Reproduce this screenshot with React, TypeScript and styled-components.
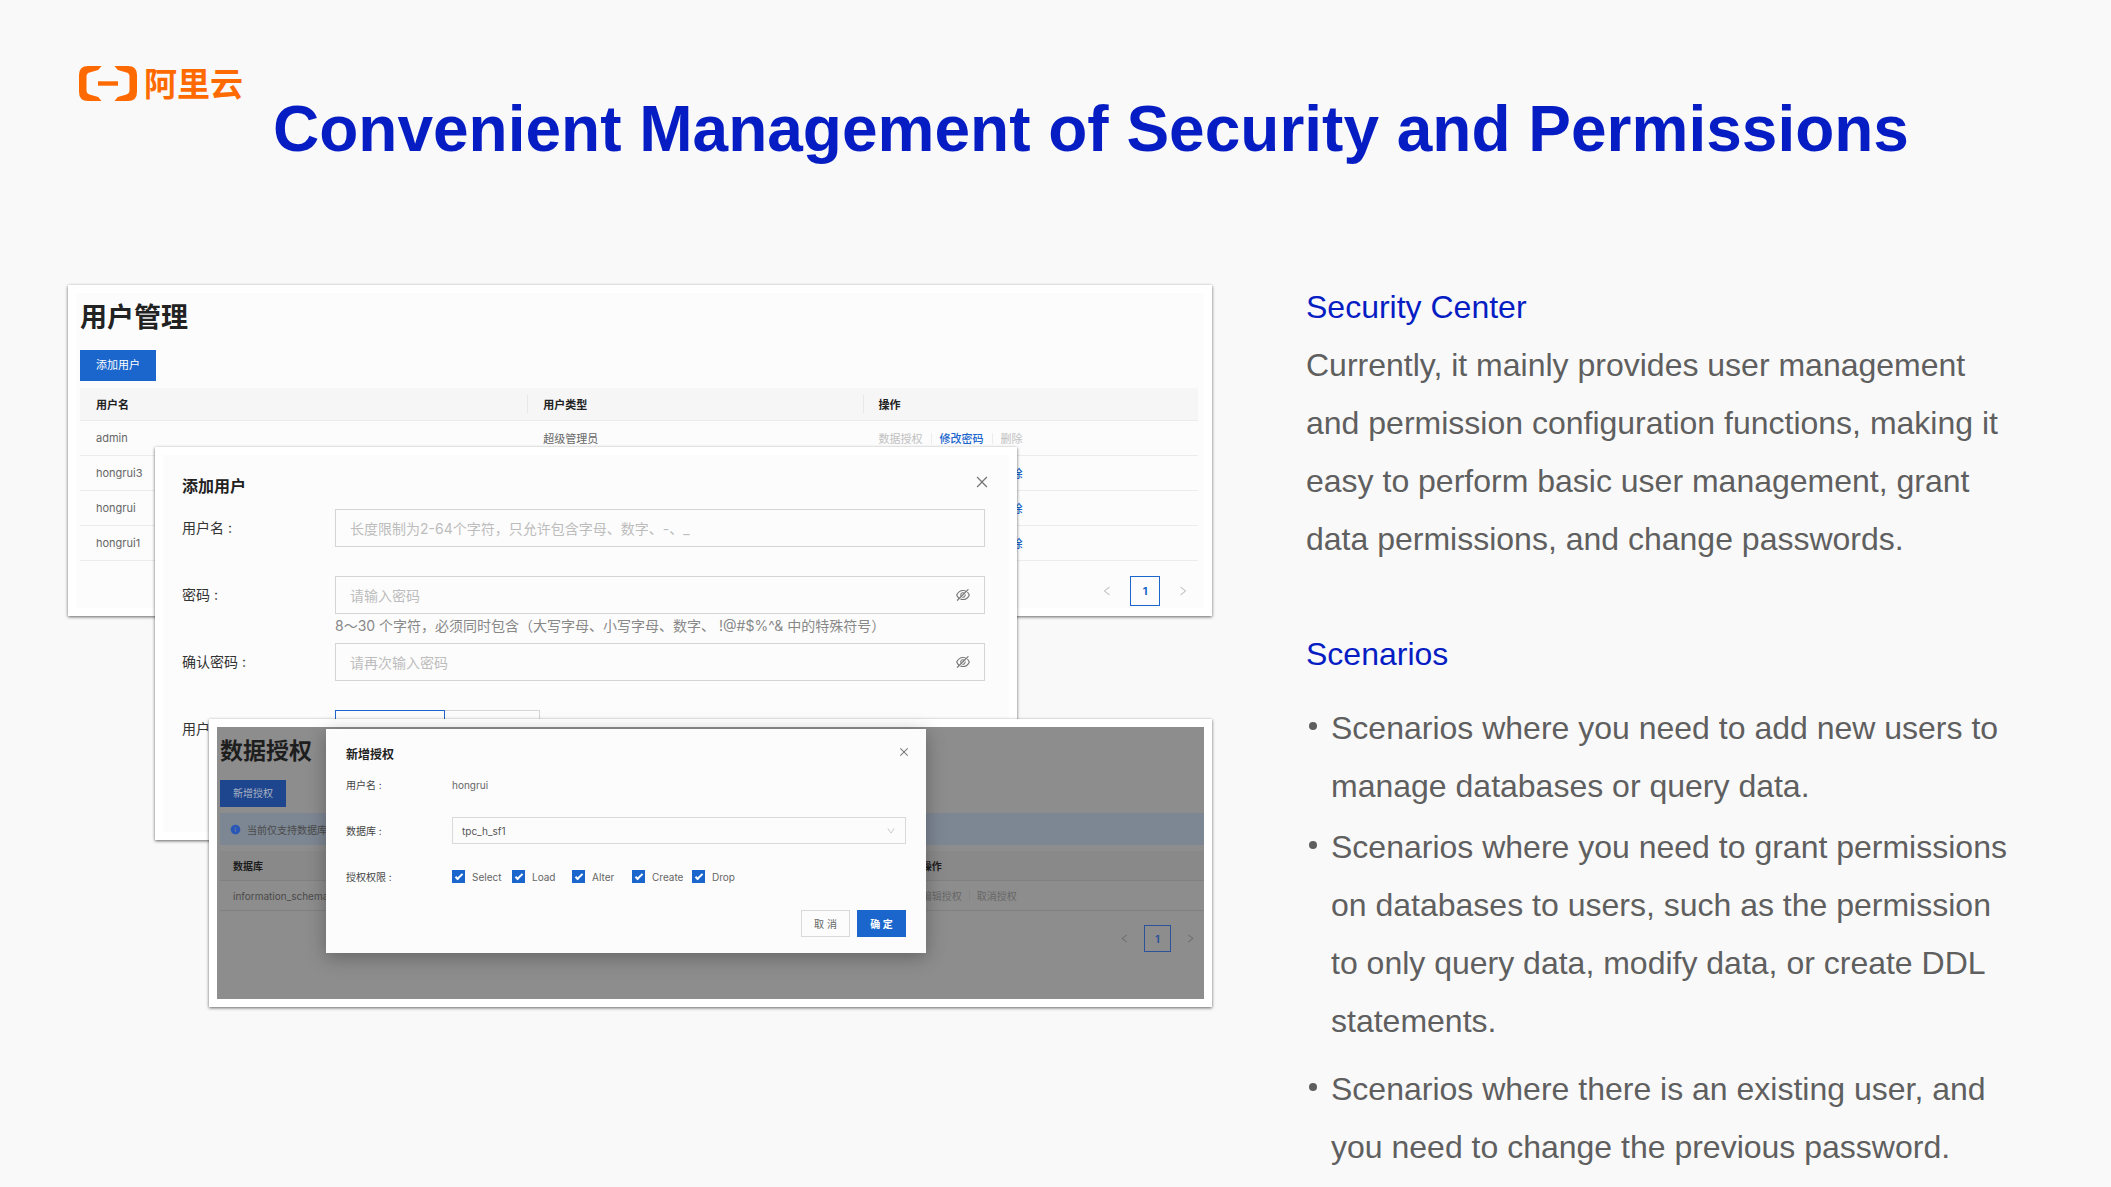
import React from 'react';
import styled, { createGlobalStyle, css } from 'styled-components';
import {
  AiFillInfoCircle,
  AiOutlineClose,
  AiOutlineDown,
  AiOutlineEyeInvisible,
  AiOutlineLeft,
  AiOutlineRight,
} from 'react-icons/ai';

const sans = '"Liberation Sans", Arial, sans-serif';
const ui = 'Inter, "Noto Sans CJK SC", sans-serif';
const blue = '#1a66cc';
const titleBlue = '#071dc4';

const GlobalStyle = createGlobalStyle`
  *, *::before, *::after { box-sizing: border-box; }
  body { margin: 0; background: #f9f9f9; }
  h1, h2, h3, p, ul { margin: 0; padding: 0; font-weight: inherit; }
  button, input, select { font: inherit; color: inherit; margin: 0; }
  button { padding: 0; border: 0; background: none; cursor: pointer; }
  a { text-decoration: none; }
`;

const Page = styled.div`
  min-height: 100vh;
  background: #f9f9f9;
`;

/* ---------- slide header ---------- */

const Header = styled.header`
  display: flex;
  align-items: flex-start;
  gap: 30px;
  padding: 66px 96px 0 79px;
`;

const Brand = styled.div`
  display: flex;
  align-items: flex-start;
  gap: 7px;
  flex: none;
  height: 35px;
  color: #ff6a00;
  font: 700 33px/32px "Noto Sans CJK SC", sans-serif;
`;

const PageTitle = styled.h1`
  margin-top: 27px;
  color: ${titleBlue};
  font: 700 64px/72px ${sans};
`;

const Main = styled.main`
  display: grid;
  grid-template-columns: minmax(0, 1144fr) minmax(0, 708fr);
  gap: 94px;
  align-items: start;
  margin-top: 113px;
  padding: 0 97px 0 68px;
`;

/* ---------- right-hand copy ---------- */

const Copy = styled.section`
  color: #5f5f5f;
  font: 32px/58px ${sans};
`;

const CopyHeading = styled.h2`
  color: ${titleBlue};
  font-size: 32px;

  p + & { margin-top: 57px; }
`;

const ScenarioList = styled.ul`
  margin-top: 16px;
  list-style: none;
`;

const Scenario = styled.li<{ $gap: number }>`
  display: flex;
  gap: 14px;
  margin-top: ${(p) => p.$gap}px;

  &::before {
    content: '';
    flex: none;
    width: 8px;
    height: 8px;
    margin: 23px 0 0 3px;
    border-radius: 50%;
    background: #5f5f5f;
  }
`;

/* ---------- overlapping windows ---------- */

const Stage = styled.section`
  display: grid;
  margin-top: 7px;
  font-family: ${ui};
`;

const Window = styled.div<{ $top?: number; $left?: number; $right?: number }>`
  grid-area: 1 / 1;
  align-self: start;
  min-width: 0;
  margin: ${(p) => p.$top ?? 0}px ${(p) => p.$right ?? 0}px 0 ${(p) => p.$left ?? 0}px;
  border: 8px solid #fff;
  background: #fcfcfc;
  box-shadow: 0 1px 3px rgba(0, 0, 0, 0.6);
`;

const UsersBody = styled.div`
  padding: 7px 6px 2px 4px;
  color: #666;
  font-size: 11px;
`;

const WindowTitle = styled.h2<{ $small?: boolean }>`
  color: #222;
  font-weight: 700;
  ${(p) =>
    p.$small
      ? css`margin-bottom: 13px; color: #1e1e1e; font-size: 23px; line-height: 32px;`
      : css`margin-bottom: 14px; font-size: 27px; line-height: 36px;`}
`;

const PrimaryButton = styled.button`
  display: block;
  height: 31px;
  padding: 0 16px;
  background: ${blue};
  color: #fff;
  line-height: 31px;
`;

const DataTable = styled.table`
  width: 100%;
  border-collapse: separate;
  border-spacing: 0;
  table-layout: fixed;
  text-align: left;
`;

const UserTable = styled(DataTable)`
  margin-top: 7px;

  th {
    position: relative;
    height: 33px;
    padding: 0 15px 0 16px;
    border-bottom: 1px solid #ececec;
    background: #f6f6f6;
    color: #222;
    font-weight: 700;
  }
  th + th::before {
    content: '';
    position: absolute;
    left: 0;
    top: 7px;
    height: 18px;
    border-left: 1px solid #e8e8e8;
  }
  td {
    height: 35px;
    padding: 0 15px 0 16px;
    border-bottom: 1px solid #ececec;
  }
`;

const Actions = styled.div<{ $gap: number }>`
  display: flex;
  align-items: center;
  gap: ${(p) => p.$gap}px;
`;

const Divider = styled.span<{ $dark?: boolean }>`
  width: 1px;
  height: 11px;
  background: ${(p) => (p.$dark ? '#858585' : '#ececec')};
`;

const ActionLink = styled.a<{ $off?: boolean; $dark?: boolean }>`
  color: ${(p) => (p.$dark ? '#676767' : p.$off ? '#c0c0c0' : blue)};
  font-weight: ${(p) => (p.$off || p.$dark ? 400 : 500)};
`;

const Pager = styled.nav<{ $size: number; $gap: number; $top: number; $dark?: boolean }>`
  display: flex;
  justify-content: flex-end;
  gap: ${(p) => p.$gap}px;
  margin-top: ${(p) => p.$top}px;
  color: ${(p) => (p.$dark ? '#6a6a6a' : '#bfbfbf')};

  button {
    display: flex;
    align-items: center;
    justify-content: center;
    width: ${(p) => p.$size}px;
    height: ${(p) => p.$size}px;
  }
  button[aria-current] {
    border: 1px solid ${(p) => (p.$dark ? '#2c529a' : blue)};
    color: ${(p) => (p.$dark ? '#2c529a' : blue)};
    font-weight: 700;
  }
`;

/* ---------- add-user form ---------- */

const AddUserBody = styled.div`
  padding: 19px 16px 55px 19px;
  color: #333;
  font-size: 14px;
`;

const DialogHead = styled.div`
  display: flex;
  justify-content: space-between;
  align-items: flex-start;
`;

const DialogTitle = styled.h3<{ $small?: boolean }>`
  color: #222;
  font-weight: 700;
  ${(p) =>
    p.$small
      ? css`margin-bottom: 7px; font-size: 12px; line-height: 18px;`
      : css`margin-bottom: 11px; font-size: 16px; line-height: 24px;`}
`;

const CloseButton = styled.button`
  display: flex;
  padding: 0 3px;
  color: #777;
`;

const ModalClose = styled(CloseButton)`
  padding: 0;
  margin-right: -4px;
`;

const FormRow = styled.div`
  display: grid;
  grid-template-columns: 153px minmax(0, 1fr);
  min-height: 67px;
  margin-right: 8px;
`;

const FormLabel = styled.label`
  line-height: 38px;
`;

const TextBox = styled.div`
  display: flex;
  align-items: center;
  height: 38px;
  padding-right: 13px;
  border: 1px solid #d5d5d5;

  input {
    flex: 1;
    min-width: 0;
    height: 100%;
    padding: 0 14px;
    border: 0;
    outline: 0;
    background: none;
  }
  input::placeholder {
    color: #bdbdbd;
    opacity: 1;
  }
  button {
    display: flex;
    color: #777;
  }
`;

const Help = styled.p`
  color: #888;
  line-height: 24px;
`;

const Segments = styled.div`
  display: flex;
  height: 38px;
`;

const Segment = styled.button<{ $active?: boolean }>`
  padding: 0 19px;
  border: 1px solid ${(p) => (p.$active ? blue : '#d5d5d5')};
  ${(p) => !p.$active && 'border-left: 0;'}
  color: ${(p) => (p.$active ? blue : '#666')};
`;

/* ---------- data authorisation window ---------- */

const GrantBody = styled.div`
  position: relative;
  padding: 8px 0 47px 3px;
  background: #8d8d8d;
  color: #4a4a4a;
  font-size: 10px;
`;

const DimButton = styled(PrimaryButton)`
  height: 27px;
  padding: 0 13px;
  background: #1d468e;
  color: #aab2c2;
  line-height: 27px;
`;

const Notice = styled.div`
  display: flex;
  align-items: center;
  gap: 6px;
  height: 32px;
  margin: 6px 0;
  padding-left: 10px;
  background: #7d8793;

  svg { color: #2857b5; }
`;

const GrantTable = styled(DataTable)`
  th {
    height: 30px;
    padding: 0 13px;
    border-bottom: 1px solid #818181;
    background: #898989;
    color: #1c1c1c;
    font-weight: 700;
  }
  td {
    height: 30px;
    padding: 0 13px;
    border-bottom: 1px solid #818181;
  }
`;

const Modal = styled.div`
  position: absolute;
  top: 2px;
  left: 109px;
  width: 61%;
  max-width: 600px;
  padding: 17px 20px 16px;
  background: #fcfcfc;
  color: #444;
  box-shadow: 0 4px 18px rgba(0, 0, 0, 0.3);
`;

const ModalRow = styled.div`
  display: grid;
  grid-template-columns: 106px minmax(0, 1fr);
  align-items: center;
  height: 27px;
  margin-bottom: 19px;
`;

const Value = styled.output`
  color: #666;
`;

const SelectBox = styled.div`
  display: grid;
  align-items: center;
  height: 27px;
  border: 1px solid #d9d9d9;

  select {
    grid-area: 1 / 1;
    width: 100%;
    height: 100%;
    padding: 0 9px;
    border: 0;
    outline: 0;
    appearance: none;
    background: none;
    color: #555;
  }
  svg {
    grid-area: 1 / 1;
    justify-self: end;
    margin-right: 9px;
    color: #bfbfbf;
    pointer-events: none;
  }
`;

const Checks = styled.div`
  display: grid;
  grid-template-columns: repeat(5, 60px);
`;

const Check = styled.label`
  display: flex;
  align-items: center;
  gap: 7px;
  color: #666;

  input {
    display: grid;
    place-items: center;
    appearance: none;
    width: 13px;
    height: 13px;
    background: ${blue};
  }
  input::after {
    content: '';
    width: 4px;
    height: 8px;
    margin-top: -2px;
    border: solid #fff;
    border-width: 0 2px 2px 0;
    transform: rotate(45deg);
  }
`;

const ModalFoot = styled.div`
  display: flex;
  justify-content: flex-end;
  gap: 7px;
  padding-top: 1px;
`;

const FootButton = styled.button<{ $primary?: boolean }>`
  width: 49px;
  height: 27px;
  border: 1px solid ${(p) => (p.$primary ? blue : '#d9d9d9')};
  background: ${(p) => (p.$primary ? blue : '#fcfcfc')};
  color: ${(p) => (p.$primary ? '#fff' : '#666')};
  font-weight: ${(p) => (p.$primary ? 700 : 400)};
`;

/* ---------- pieces ---------- */

const LogoMark = () => {
  const bracket =
    'M22.5 0H9Q0 0 0 9V26Q0 35 9 35H22.5L19.2 31L10.5 28.4Q7.5 27.4 7.5 24.5V10.5Q7.5 7.6 10.5 6.6L19.2 4Z';
  return (
    <svg width="58" height="35" viewBox="0 0 58 35" fill="currentColor" aria-hidden="true">
      <path d={bracket} />
      <path d={bracket} transform="translate(58 0) scale(-1 1)" />
      <rect x="19" y="15.3" width="20" height="4.4" />
    </svg>
  );
};

const PagerNav = (props: { size: number; gap: number; top: number; icon: number; dark?: boolean }) => (
  <Pager $size={props.size} $gap={props.gap} $top={props.top} $dark={props.dark}>
    <button aria-label="上一页"><AiOutlineLeft size={props.icon} /></button>
    <button aria-current="page">1</button>
    <button aria-label="下一页"><AiOutlineRight size={props.icon} /></button>
  </Pager>
);

const users = [
  { name: 'admin', type: '超级管理员', root: true },
  { name: 'hongrui3', type: '普通用户', root: false },
  { name: 'hongrui', type: '普通用户', root: false },
  { name: 'hongrui1', type: '普通用户', root: false },
];

const permissions = ['Select', 'Load', 'Alter', 'Create', 'Drop'];

const UsersWindow = () => (
  <Window>
    <UsersBody>
      <WindowTitle>用户管理</WindowTitle>
      <PrimaryButton>添加用户</PrimaryButton>
      <UserTable>
        <colgroup>
          <col style={{ width: '40%' }} />
          <col style={{ width: '30%' }} />
          <col style={{ width: '30%' }} />
        </colgroup>
        <thead>
          <tr><th>用户名</th><th>用户类型</th><th>操作</th></tr>
        </thead>
        <tbody>
          {users.map((u) => (
            <tr key={u.name}>
              <td>{u.name}</td>
              <td>{u.type}</td>
              <td>
                <Actions $gap={8}>
                  <ActionLink href="#" $off={u.root}>数据授权</ActionLink>
                  <Divider />
                  <ActionLink href="#">修改密码</ActionLink>
                  <Divider />
                  <ActionLink href="#" $off={u.root}>删除</ActionLink>
                </Actions>
              </td>
            </tr>
          ))}
        </tbody>
      </UserTable>
      <PagerNav size={30} gap={8} top={15} icon={12} />
    </UsersBody>
  </Window>
);

const AddUserWindow = () => (
  <Window $top={162} $left={87} $right={195}>
    <AddUserBody>
      <DialogHead>
        <DialogTitle>添加用户</DialogTitle>
        <CloseButton aria-label="关闭"><AiOutlineClose size={16} /></CloseButton>
      </DialogHead>
      <FormRow>
        <FormLabel htmlFor="user-name">用户名 :</FormLabel>
        <TextBox>
          <input id="user-name" placeholder="长度限制为2-64个字符，只允许包含字母、数字、-、_" />
        </TextBox>
      </FormRow>
      <FormRow>
        <FormLabel htmlFor="password">密码 :</FormLabel>
        <div>
          <TextBox>
            <input id="password" type="password" placeholder="请输入密码" />
            <button aria-label="显示密码"><AiOutlineEyeInvisible size={16} /></button>
          </TextBox>
          <Help>8～30 个字符，必须同时包含（大写字母、小写字母、数字、 !@#$%^&amp; 中的特殊符号）</Help>
        </div>
      </FormRow>
      <FormRow>
        <FormLabel htmlFor="confirm">确认密码 :</FormLabel>
        <TextBox>
          <input id="confirm" type="password" placeholder="请再次输入密码" />
          <button aria-label="显示密码"><AiOutlineEyeInvisible size={16} /></button>
        </TextBox>
      </FormRow>
      <FormRow>
        <FormLabel as="span">用户类型 :</FormLabel>
        <Segments>
          <Segment $active>高级管理员</Segment>
          <Segment>普通用户</Segment>
        </Segments>
      </FormRow>
    </AddUserBody>
  </Window>
);

const GrantWindow = () => (
  <Window $top={434} $left={141}>
    <GrantBody>
      <WindowTitle $small>数据授权</WindowTitle>
      <DimButton>新增授权</DimButton>
      <Notice><AiFillInfoCircle size={11} />当前仅支持数据库</Notice>
      <GrantTable>
        <colgroup>
          <col style={{ width: '70%' }} />
          <col style={{ width: '30%' }} />
        </colgroup>
        <thead>
          <tr><th>数据库</th><th>操作</th></tr>
        </thead>
        <tbody>
          <tr>
            <td>information_schema</td>
            <td>
              <Actions $gap={7}>
                <ActionLink href="#" $dark>编辑授权</ActionLink>
                <Divider $dark />
                <ActionLink href="#" $dark>取消授权</ActionLink>
              </Actions>
            </td>
          </tr>
        </tbody>
      </GrantTable>
      <PagerNav size={27} gap={6} top={14} icon={11} dark />
      <Modal role="dialog" aria-label="新增授权">
        <DialogHead>
          <DialogTitle $small>新增授权</DialogTitle>
          <ModalClose aria-label="关闭"><AiOutlineClose size={12} /></ModalClose>
        </DialogHead>
        <ModalRow>
          <label htmlFor="grant-user">用户名 :</label>
          <Value id="grant-user">hongrui</Value>
        </ModalRow>
        <ModalRow>
          <label htmlFor="grant-db">数据库 :</label>
          <SelectBox>
            <select id="grant-db" defaultValue="tpc_h_sf1">
              <option>tpc_h_sf1</option>
            </select>
            <AiOutlineDown size={10} />
          </SelectBox>
        </ModalRow>
        <ModalRow>
          <span>授权权限 :</span>
          <Checks>
            {permissions.map((name) => (
              <Check key={name}>
                <input type="checkbox" defaultChecked />
                {name}
              </Check>
            ))}
          </Checks>
        </ModalRow>
        <ModalFoot>
          <FootButton>取 消</FootButton>
          <FootButton $primary>确 定</FootButton>
        </ModalFoot>
      </Modal>
    </GrantBody>
  </Window>
);

export default function App() {
  return (
    <Page lang="zh-CN">
      <GlobalStyle />
      <Header>
        <Brand><LogoMark />阿里云</Brand>
        <PageTitle>Convenient Management of Security and Permissions</PageTitle>
      </Header>
      <Main>
        <Stage>
          <UsersWindow />
          <AddUserWindow />
          <GrantWindow />
        </Stage>
        <Copy lang="en">
          <CopyHeading>Security Center</CopyHeading>
          <p>
            Currently, it mainly provides user management and permission configuration functions,
            making it easy to perform basic user management, grant data permissions, and change
            passwords.
          </p>
          <CopyHeading>Scenarios</CopyHeading>
          <ScenarioList>
            <Scenario $gap={0}>
              <span>Scenarios where you need to add new users to manage databases or query data.</span>
            </Scenario>
            <Scenario $gap={3}>
              <span>
                Scenarios where you need to grant permissions on databases to users, such as the
                permission to only query data, modify data, or create DDL statements.
              </span>
            </Scenario>
            <Scenario $gap={10}>
              <span>
                Scenarios where there is an existing user, and you need to change the previous
                password.
              </span>
            </Scenario>
          </ScenarioList>
        </Copy>
      </Main>
    </Page>
  );
}
